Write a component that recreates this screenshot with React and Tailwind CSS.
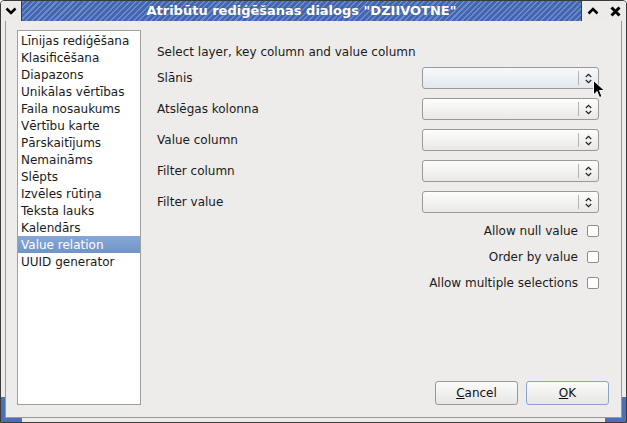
import React from 'react'

const pages = [
  'Līnijas rediģēšana',
  'Klasificēšana',
  'Diapazons',
  'Unikālas vērtības',
  'Faila nosaukums',
  'Vērtību karte',
  'Pārskaitījums',
  'Nemaināms',
  'Slēpts',
  'Izvēles rūtiņa',
  'Teksta lauks',
  'Kalendārs',
  'Value relation',
  'UUID generator',
]

const fields = ['Slānis', 'Atslēgas kolonna', 'Value column', 'Filter column', 'Filter value']
const flags = ['Allow null value', 'Order by value', 'Allow multiple selections']

function Chevron({ up }) {
  return (
    <svg width="12" height="10" viewBox="0 0 12 10">
      <path
        d={up ? 'M1.5 7.5 L6 3 L10.5 7.5' : 'M1.5 2.5 L6 7 L10.5 2.5'}
        fill="none"
        stroke="#000"
        strokeWidth="2.6"
      />
    </svg>
  )
}

function Combo({ hover }) {
  return (
    <div
      className={
        'flex h-[22px] w-[177px] items-center rounded-[3px] border border-[#9a9996] ' +
        (hover
          ? 'bg-gradient-to-b from-[#f7f9fb] to-[#e2e8ef]'
          : 'bg-gradient-to-b from-[#fdfdfc] to-[#e9e8e5]')
      }
    >
      <div className="flex-1" />
      <div className="h-[14px] w-px bg-[#b5b3ae]" />
      <div className="flex w-[19px] justify-center">
        <svg width="7" height="11" viewBox="0 0 7 11">
          <path d="M0.8 4 L3.5 1.3 L6.2 4 M0.8 7 L3.5 9.7 L6.2 7" fill="none" stroke="#222" strokeWidth="1.2" />
        </svg>
      </div>
    </div>
  )
}

function Button({ children, focused }) {
  return (
    <div
      className={
        'flex h-[24px] w-[83px] items-center justify-center rounded-[3px] border bg-gradient-to-b from-[#fbfbfa] to-[#e7e6e3] text-[12px] text-[#101010] ' +
        (focused ? 'border-[#8aa4c8]' : 'border-[#9a9996]')
      }
    >
      {children}
    </div>
  )
}

export default function App() {
  return (
    <div
      className="relative flex h-[423px] w-[627px] flex-col overflow-hidden rounded-t-[4px] border border-[#3a3a3a] bg-[#edeceb] text-[12px] text-[#1a1a1a]"
      style={{ fontFamily: '"DejaVu Sans", sans-serif' }}
    >
      {/* title bar */}
      <div className="flex h-[20px] shrink-0">
        <div className="flex w-[21px] items-center justify-center border-r border-[#3a3a3a] bg-[#ecebe9]">
          <Chevron />
        </div>
        <div className="flex flex-1 items-center justify-center bg-[#4d6fb5] bg-[repeating-linear-gradient(135deg,#6a8ccc_0px,#6a8ccc_1.5px,#4466ad_1.5px,#4466ad_4px)] text-[13px] font-bold text-white">
          <span className="[text-shadow:0_0_3px_#3f5f9f]">Atribūtu rediģēšanas dialogs "DZIIVOTNE"</span>
        </div>
        <div className="flex w-[45px] items-center border-l border-[#3a3a3a] bg-[#ecebe9]">
          <div className="flex w-[22px] justify-center">
            <Chevron up />
          </div>
          <div className="flex w-[22px] justify-center">
            <svg width="11" height="11" viewBox="0 0 11 11">
              <path d="M1.5 1.5 L9.5 9.5 M9.5 1.5 L1.5 9.5" stroke="#000" strokeWidth="3" />
            </svg>
          </div>
        </div>
      </div>

      {/* window frame */}
      <div className="flex flex-1 px-[4px] pb-[4px]">
        <div className="flex flex-1 border-x border-b border-[#9b9a97]">
          {/* page list */}
          <div className="ml-[11px] mt-[9px] mb-[12px] flex w-[124px] flex-col border border-[#a09f9c] bg-white pt-[1px]">
            {pages.map((p) => (
              <div
                key={p}
                className={
                  'flex h-[17px] items-center px-[3px] leading-none ' +
                  (p === 'Value relation'
                    ? 'bg-gradient-to-b from-[#86a7d6] to-[#7194c8] text-white'
                    : 'text-[#1a1a1a]')
                }
              >
                {p}
              </div>
            ))}
          </div>

          {/* value relation settings */}
          <div className="flex flex-1 flex-col pl-[16px] pr-[22px]">
            <div className="mt-[24px] h-[15px] leading-[15px]">Select layer, key column and value column</div>
            <div className="mt-[7px] flex flex-col gap-[9px]">
              {fields.map((f, i) => (
                <div key={f} className="flex items-center justify-between">
                  <span>{f}</span>
                  <Combo hover={i === 0} />
                </div>
              ))}
            </div>
            <div className="mt-[12px] flex flex-col gap-[14px]">
              {flags.map((f) => (
                <div key={f} className="flex h-[12px] items-center justify-end gap-[9px]">
                  <span className="leading-none">{f}</span>
                  <div className="h-[12px] w-[12px] rounded-[2px] border border-[#8f8e8a] bg-white" />
                </div>
              ))}
            </div>
            <div className="flex-1" />
            <div className="mb-[12px] mr-[-10px] flex justify-end gap-[8px]">
              <Button>
                <u>C</u>ancel
              </Button>
              <Button focused>
                <u>O</u>K
              </Button>
            </div>
          </div>
        </div>
      </div>

      {/* resize grips in the lower corners */}
      <div className="absolute bottom-0 left-0 h-[4px] w-[21px] bg-[#4d6fb5]" />
      <div className="absolute bottom-0 left-0 h-[25px] w-[4px] bg-[#4d6fb5]" />
      <div className="absolute bottom-0 right-0 h-[4px] w-[21px] bg-[#4d6fb5]" />
      <div className="absolute bottom-0 right-0 h-[25px] w-[4px] bg-[#4d6fb5]" />

      {/* mouse pointer */}
      <svg className="absolute left-[592px] top-[79px]" width="13" height="19" viewBox="0 0 13 19">
        <path d="M0.5 0.5 L0.5 15 L4 11.5 L6.5 17.5 L9 16.5 L6.5 10.5 L11.5 10.5 Z" fill="#000" stroke="#fff" strokeWidth="1" />
      </svg>
    </div>
  )
}
